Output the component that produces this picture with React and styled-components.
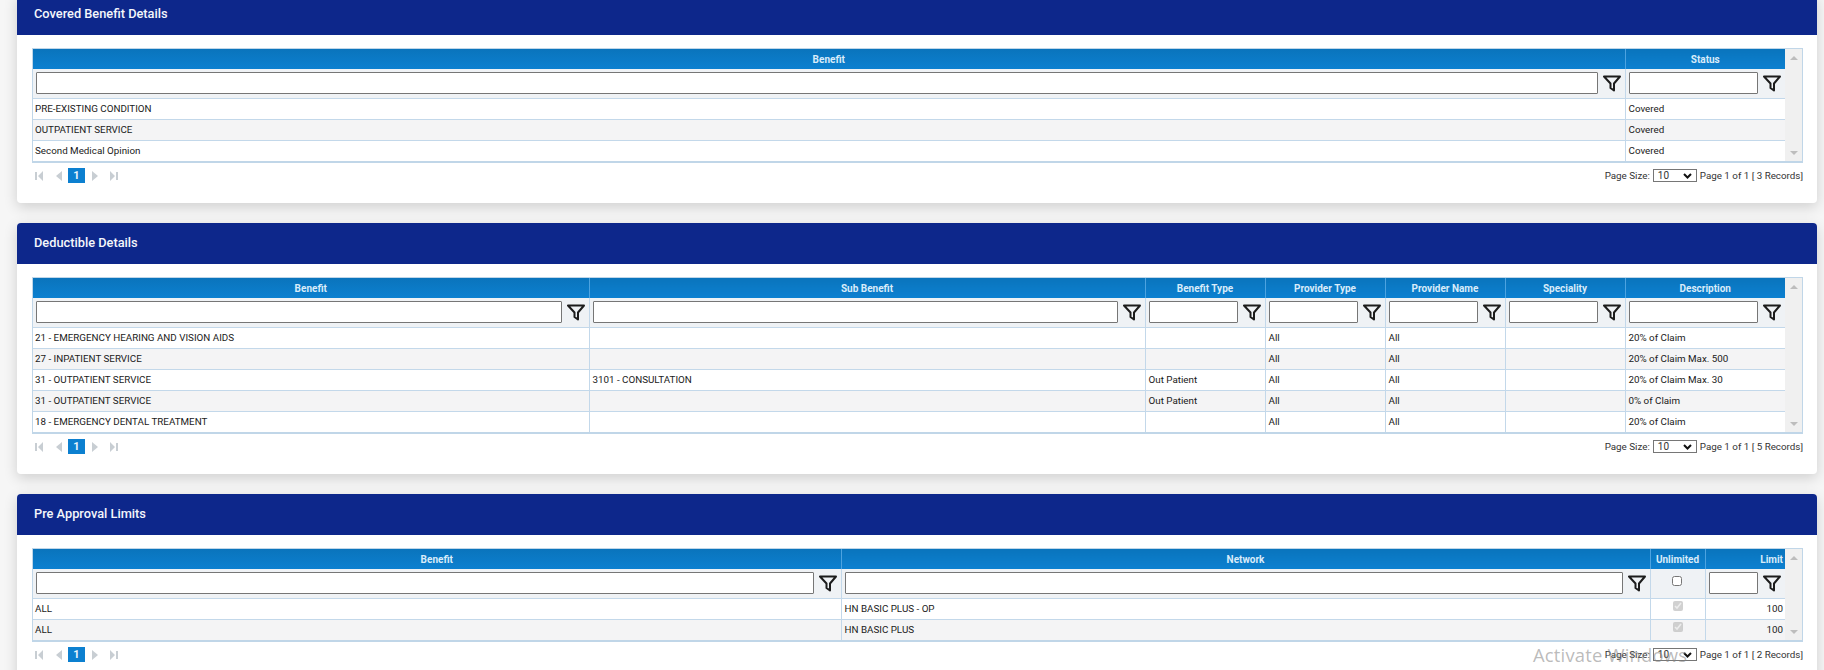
import React from "react";
import styled, { createGlobalStyle } from "styled-components";

const GlobalStyle = createGlobalStyle`
  html, body {
    margin: 0;
    padding: 0;
    height: 670px;
    overflow: hidden;
    background: #f6f6f6;
    font-family: Roboto, "Liberation Sans", sans-serif;
  }
`;

// the page is scrolled a little, the first band is cut at the top
const Page = styled.div`
  position: relative;
  height: 676px;
  margin-top: -6px;
  padding-left: 17px;
  padding-right: 7px;
  display: flex;
  flex-direction: column;
  gap: 20px;
  overflow: hidden;
`;

const Panel = styled.section`
  flex: none;
  background: #fff;
  border-radius: 4px;
  box-shadow: 0 4px 14px rgba(0, 0, 0, 0.16);
`;

const PanelTitle = styled.h2`
  margin: 0;
  height: 41px;
  padding-left: 17px;
  background: #0d278b;
  border-radius: 4px 4px 0 0;
  color: #f4f6fb;
  font-size: 12.8px;
  font-weight: 500;
  line-height: 40px;
`;

const PanelBody = styled.div`
  padding: 13px 14px 20px 15px;
`;

const GridBox = styled.div`
  display: flex;
  border: 1px solid #c0d6e8;
  border-bottom-width: 2px;
  background: #f0f0f0;
`;

const Table = styled.table`
  flex: none;
  width: 1752px;
  table-layout: fixed;
  border-collapse: collapse;
  font-size: 9.8px;
  color: #1a1a1a;
`;

const Head = styled.th`
  box-sizing: border-box;
  height: 20px;
  padding: 0 2px;
  background: linear-gradient(#0a74bc, #0c80d0);
  border-left: 1px solid #4da3e0;
  color: #d9ecfa;
  font-size: 10px;
  font-weight: 700;
  text-align: ${(p) => p.$align || "center"};
  &:first-child {
    border-left: 0;
  }
`;

const FilterCell = styled.td`
  box-sizing: border-box;
  height: 29px;
  padding: 0;
  background: #eff2f5;
  border-left: 1px solid #c3d8ea;
  border-bottom: 1px solid #c3d8ea;
  &:first-child {
    border-left: 0;
  }
`;

const FilterWrap = styled.div`
  display: flex;
  align-items: center;
  justify-content: ${(p) => (p.$center ? "center" : "flex-start")};
  gap: 5px;
  padding: 0 4px 0 3px;
`;

const FilterInput = styled.input`
  flex: 1;
  min-width: 0;
  height: 22px;
  box-sizing: border-box;
  border: 1px solid #767676;
  border-radius: 1px;
  background: #fff;
  padding: 0 2px;
`;

const Row = styled.tr`
  background: ${(p) => (p.$alt ? "#f4f4f5" : "#fff")};
`;

const Cell = styled.td`
  box-sizing: border-box;
  height: 21px;
  padding: 0 2px 1px 3px;
  border-left: 1px solid #c3d8ea;
  border-bottom: 1px solid #c3d8ea;
  text-align: ${(p) => p.$align || "left"};
  white-space: nowrap;
  overflow: hidden;
  &:first-child {
    border-left: 0;
    padding-left: 2px;
  }
  tr:last-child > & {
    border-bottom: 0;
  }
`;

const Check = styled.input.attrs({ type: "checkbox" })`
  display: block;
  width: 10px;
  height: 10px;
  margin: 0 auto 5px;
  accent-color: #c9c9c9;
`;

const ScrollBar = styled.div`
  flex: 1;
  display: flex;
  flex-direction: column;
  justify-content: space-between;
  align-items: center;
  padding: 7px 0 6px;
  background: #f0f0f0;
`;

const Arrow = styled.span`
  width: 0;
  height: 0;
  border-left: 4px solid transparent;
  border-right: 4px solid transparent;
  border-${(p) => (p.$up ? "bottom" : "top")}: 4px solid #bdbdbd;
`;

const Pager = styled.div`
  display: flex;
  align-items: center;
  justify-content: space-between;
  height: 15px;
  margin-top: 5px;
  font-size: 9.8px;
  color: #333;
`;

const PagerLinks = styled.div`
  display: flex;
  align-items: center;
  padding-left: 3px;
`;

const PagerIcon = styled.svg`
  width: 9px;
  height: 10px;
  margin-right: ${(p) => p.$gap}px;
  fill: #c8ced3;
`;

const PageNumber = styled.span`
  width: 17px;
  height: 15px;
  margin-right: 5px;
  background: #0c80d0;
  color: #e8f4fc;
  font-size: 11px;
  font-weight: 700;
  line-height: 15px;
  text-align: center;
`;

const PagerInfo = styled.div`
  display: flex;
  align-items: center;
  gap: 3px;
`;

const SizeSelect = styled.div`
  display: flex;
  align-items: center;
  justify-content: space-between;
  box-sizing: border-box;
  width: 44px;
  height: 13px;
  padding: 0 4px 0 4px;
  border: 1px solid #767676;
  background: #fff;
  font-size: 10px;
`;

const Watermark = styled.div`
  position: absolute;
  left: 1533px;
  top: 648px;
  font-family: "Open Sans", "Noto Sans", sans-serif;
  font-size: 18.4px;
  color: rgba(130, 130, 130, 0.55);
  letter-spacing: 0.2px;
  white-space: nowrap;
  pointer-events: none;
`;

const FilterIcon = () => (
  <svg width="18" height="17" viewBox="0 0 18 17" fill="none" stroke="#1c1c1c" strokeWidth="2" strokeLinejoin="round" style={{ flex: "none" }}>
    <path d="M1 1.5h16L11 8.5v7L7.5 13V8.5z" />
  </svg>
);

const PagerBar = ({ records }) => (
  <Pager>
    <PagerLinks>
      <PagerIcon $gap={11} viewBox="0 0 9 10"><path d="M0 1h2v8H0zM8 0v10L3 5z" /></PagerIcon>
      <PagerIcon $gap={4} viewBox="0 0 9 10"><path d="M7 0v10L1 5z" /></PagerIcon>
      <PageNumber>1</PageNumber>
      <PagerIcon $gap={10} viewBox="0 0 9 10"><path d="M2 0v10l6-5z" /></PagerIcon>
      <PagerIcon $gap={0} viewBox="0 0 9 10"><path d="M1 0v10l5-5zM7 1h2v8H7z" /></PagerIcon>
    </PagerLinks>
    <PagerInfo>
      Page Size:
      <SizeSelect>
        10
        <svg width="9" height="6" viewBox="0 0 9 6" fill="none" stroke="#111" strokeWidth="2"><path d="M1 1l3.5 3.5L8 1" /></svg>
      </SizeSelect>
      Page 1 of 1 [ {records} Records]
    </PagerInfo>
  </Pager>
);

const Grid = ({ columns, rows }) => (
  <GridBox>
    <Table>
      <colgroup>
        {columns.map((c) => (
          <col key={c.title} style={{ width: c.width }} />
        ))}
      </colgroup>
      <thead>
        <tr>
          {columns.map((c) => (
            <Head key={c.title} $align={c.align}>{c.title}</Head>
          ))}
        </tr>
        <tr>
          {columns.map((c) => (
            <FilterCell key={c.title}>
              {c.check ? (
                <FilterWrap $center><Check readOnly /></FilterWrap>
              ) : (
                <FilterWrap>
                  <FilterInput />
                  <FilterIcon />
                </FilterWrap>
              )}
            </FilterCell>
          ))}
        </tr>
      </thead>
      <tbody>
        {rows.map((row, i) => (
          <Row key={i} $alt={i % 2 === 1}>
            {row.map((val, j) => (
              <Cell key={j} $align={columns[j].align}>
                {columns[j].check ? <Check checked disabled readOnly /> : val}
              </Cell>
            ))}
          </Row>
        ))}
      </tbody>
    </Table>
    <ScrollBar>
      <Arrow $up />
      <Arrow />
    </ScrollBar>
  </GridBox>
);

const benefitCols = [
  { title: "Benefit", width: 1592 },
  { title: "Status", width: 160 },
];
const benefitRows = [
  ["PRE-EXISTING CONDITION", "Covered"],
  ["OUTPATIENT SERVICE", "Covered"],
  ["Second Medical Opinion", "Covered"],
];

const deductibleCols = [
  { title: "Benefit", width: 556 },
  { title: "Sub Benefit", width: 556 },
  { title: "Benefit Type", width: 120 },
  { title: "Provider Type", width: 120 },
  { title: "Provider Name", width: 120 },
  { title: "Speciality", width: 120 },
  { title: "Description", width: 160 },
];
const deductibleRows = [
  ["21 - EMERGENCY HEARING AND VISION AIDS", "", "", "All", "All", "", "20% of Claim"],
  ["27 - INPATIENT SERVICE", "", "", "All", "All", "", "20% of Claim Max. 500"],
  ["31 - OUTPATIENT SERVICE", "3101 - CONSULTATION", "Out Patient", "All", "All", "", "20% of Claim Max. 30"],
  ["31 - OUTPATIENT SERVICE", "", "Out Patient", "All", "All", "", "0% of Claim"],
  ["18 - EMERGENCY DENTAL TREATMENT", "", "", "All", "All", "", "20% of Claim"],
];

const limitCols = [
  { title: "Benefit", width: 808 },
  { title: "Network", width: 809 },
  { title: "Unlimited", width: 55, check: true },
  { title: "Limit", width: 80, align: "right" },
];
const limitRows = [
  ["ALL", "HN BASIC PLUS - OP", "", "100"],
  ["ALL", "HN BASIC PLUS", "", "100"],
];

const App = () => (
  <>
    <GlobalStyle />
    <Page>
      <Panel>
        <PanelTitle>Covered Benefit Details</PanelTitle>
        <PanelBody>
          <Grid columns={benefitCols} rows={benefitRows} />
          <PagerBar records={3} />
        </PanelBody>
      </Panel>
      <Panel>
        <PanelTitle>Deductible Details</PanelTitle>
        <PanelBody>
          <Grid columns={deductibleCols} rows={deductibleRows} />
          <PagerBar records={5} />
        </PanelBody>
      </Panel>
      <Panel>
        <PanelTitle>Pre Approval Limits</PanelTitle>
        <PanelBody>
          <Grid columns={limitCols} rows={limitRows} />
          <PagerBar records={2} />
        </PanelBody>
      </Panel>
      <Watermark>Activate Windows</Watermark>
    </Page>
  </>
);

export default App;
